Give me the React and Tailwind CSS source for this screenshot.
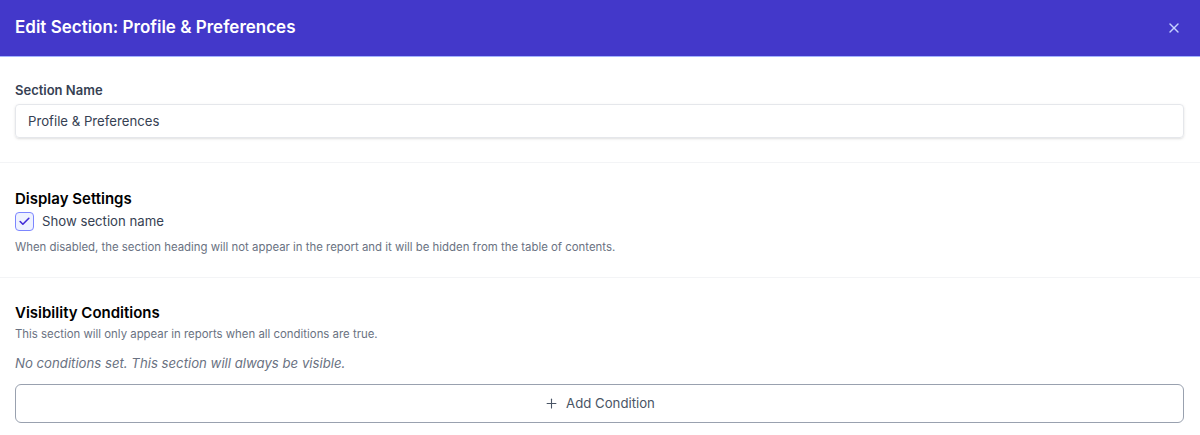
import React, { useState } from 'react';
import { X, Plus, Check } from 'lucide-react';

const App = () => {
  const [name, setName] = useState('Profile & Preferences');
  const [showName, setShowName] = useState(true);

  return (
    <div className="min-h-screen bg-white font-['Inter',sans-serif] text-gray-900">
      {/* Header */}
      <div className="flex h-[57px] items-center justify-between border-b border-indigo-300 bg-[#4338ca] pl-[15px] pr-[18px]">
        <h2 className="text-[17px] font-semibold text-white">Edit Section: Profile &amp; Preferences</h2>
        <button className="text-indigo-200 hover:text-white">
          <X size={16} strokeWidth={2} />
        </button>
      </div>

      {/* Section name */}
      <div className="border-b border-gray-100 pl-[15px] pr-4 pt-[23px] pb-6">
        <label className="mb-[4px] block text-[13px] leading-5 font-semibold text-gray-700">Section Name</label>
        <input
          value={name}
          onChange={(e) => setName(e.target.value)}
          className="block h-[34px] w-full rounded-[4px] border border-gray-200 px-3 text-[13.2px] text-gray-700 shadow-sm outline-none"
        />
      </div>

      {/* Display settings */}
      <div className="border-b border-gray-100 pl-[15px] pr-4 pt-[25px] pb-[22px]">
        <h3 className="text-[15px] leading-[22px] font-semibold text-black">Display Settings</h3>
        <label className="mt-[1px] flex items-center gap-2">
          <button
            onClick={() => setShowName(!showName)}
            className="flex h-[19px] w-[19px] items-center justify-center rounded-[4px] border border-indigo-400 bg-indigo-50 text-indigo-700"
          >
            {showName && <Check size={13} strokeWidth={3} />}
          </button>
          <span className="text-[13.2px] leading-5 text-gray-700">Show section name</span>
        </label>
        <p className="mt-[8px] text-[11.4px] leading-4 text-gray-500">
          When disabled, the section heading will not appear in the report and it will be hidden from the table of contents.
        </p>
      </div>

      {/* Visibility conditions */}
      <div className="pl-[15px] pr-4 pt-[24px]">
        <h3 className="text-[15px] leading-[22px] font-semibold text-black">Visibility Conditions</h3>
        <p className="mt-[2px] text-[11.4px] leading-4 text-gray-500">This section will only appear in reports when all conditions are true.</p>
        <p className="mt-[11px] text-[13.2px] leading-5 italic text-gray-500">No conditions set. This section will always be visible.</p>
        <button className="mt-[11px] flex h-[39px] w-full items-center justify-center gap-[7px] rounded-md border border-gray-400 bg-white text-[13.2px] text-gray-600">
          <Plus size={15} strokeWidth={1.75} />
          Add Condition
        </button>
      </div>
    </div>
  );
};

export default App;
